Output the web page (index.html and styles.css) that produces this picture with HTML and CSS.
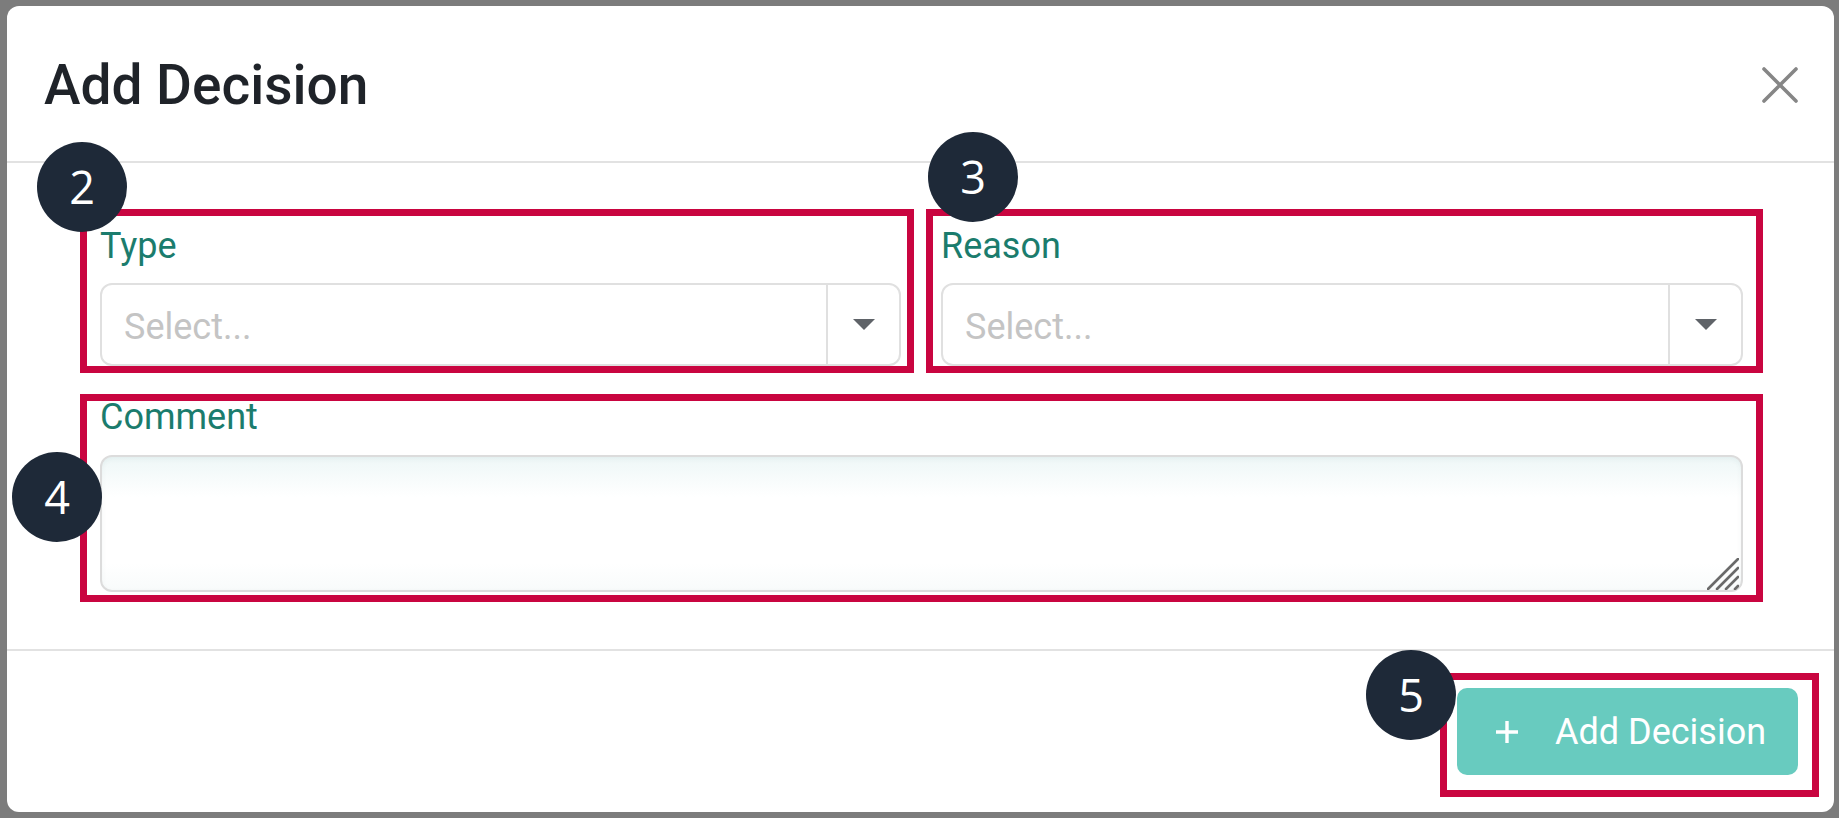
FILE: index.html
```html
<!DOCTYPE html>
<html lang="en">
<head>
	<title>Add Decision</title>
	<meta name="viewport" content="initial-scale=1.0">
	<meta charset="utf-8">

	<link rel="stylesheet" href="styles.css">
</head>
<body>

	<div class="modal">
		<header class="modal-header">
			<h2 class="modal-title">Add Decision</h2>
			<button class="modal-close" aria-label="Close">
				<svg width="36" height="36" viewBox="0 0 36 36"><path d="M2 2 L34 34 M34 2 L2 34" stroke="#868686" stroke-width="3.6" stroke-linecap="round"/></svg>
			</button>
		</header>

		<div class="modal-body">
			<div class="field-row">
				<div class="callout callout-type">
					<span class="badge badge-2">2</span>
					<label class="field-label">Type</label>
					<div class="select">
						<span class="select-value">Select...</span>
						<span class="select-indicator">
							<svg width="22" height="11" viewBox="0 0 22 11"><path d="M0 0 H22 L11 11 Z" fill="#5f6368"/></svg>
						</span>
					</div>
				</div>

				<div class="callout callout-reason">
					<span class="badge badge-3">3</span>
					<label class="field-label">Reason</label>
					<div class="select">
						<span class="select-value">Select...</span>
						<span class="select-indicator">
							<svg width="22" height="11" viewBox="0 0 22 11"><path d="M0 0 H22 L11 11 Z" fill="#5f6368"/></svg>
						</span>
					</div>
				</div>
			</div>

			<div class="callout callout-comment">
				<span class="badge badge-4">4</span>
				<label class="field-label" for="comment">Comment</label>
				<div class="textarea-wrap">
					<textarea id="comment" class="textarea"></textarea>
					<svg class="grip" width="32" height="32" viewBox="0 0 32 32"><path d="M31 1 L1 31 M31 10 L10 31 M31 19 L19 31 M31 28 L28 31" stroke="#6a6a6a" stroke-width="2.6" stroke-linecap="round"/></svg>
				</div>
			</div>
		</div>

		<footer class="modal-footer">
			<div class="callout callout-submit">
				<span class="badge badge-5">5</span>
				<button class="btn-add">
					<svg width="24" height="24" viewBox="0 0 24 24"><path d="M12 1 V23 M1 12 H23" stroke="#ffffff" stroke-width="3.4"/></svg>
					<span>Add Decision</span>
				</button>
			</div>
		</footer>
	</div>

</body>
</html>
```

FILE: styles.css
```css
body, html {
	height: 100%;
	margin: 0;
	padding: 0;
	overflow: hidden;
	font-family: Roboto, "Liberation Sans", Arial, sans-serif;
	-webkit-font-smoothing: antialiased;
}

body {
	background: #7c7c7c;
	padding: 6px 5px 6px 7px;
}

* {
	box-sizing: border-box;
}

.modal {
	height: 806px;
	background: #fff;
	border-radius: 12px;
	display: flex;
	flex-direction: column;
}

.modal-header {
	height: 157px;
	display: flex;
	align-items: center;
	justify-content: space-between;
	padding: 2px 36px 0 37px;
	border-bottom: 2px solid #e2e2e2;
}

.modal-title {
	margin: 0;
	font-size: 55px;
	font-weight: 500;
	color: #1f2329;
}

.modal-close {
	border: none;
	background: none;
	padding: 0;
	width: 36px;
	height: 36px;
	display: flex;
	cursor: pointer;
}

.modal-body {
	padding: 46px 71px 47px 73px;
	border-bottom: 2px solid #e2e2e2;
	display: flex;
	flex-direction: column;
	gap: 21px;
}

.field-row {
	display: grid;
	grid-template-columns: 834px 837px;
	gap: 12px;
}

/* red annotation frames */
.callout {
	position: relative;
	border: 7px solid #c90540;
	display: flex;
	flex-direction: column;
}

.callout-type {
	height: 164px;
	padding: 10px 6px 0 13px;
	gap: 17px;
}

.callout-reason {
	height: 164px;
	padding: 10px 13px 0 8px;
	gap: 17px;
}

.callout-comment {
	height: 208px;
	padding: 0 13px 3px 13px;
	gap: 18px;
}

.callout-comment .field-label {
	margin-top: -4px;
}

.callout-submit {
	padding: 8px 14px 15px 10px;
}

.badge {
	position: absolute;
	z-index: 3;
	width: 90px;
	height: 90px;
	border-radius: 50%;
	background: #1e2938;
	color: #fff;
	font-family: "Open Sans", sans-serif;
	font-size: 45px;
	line-height: 90px;
	text-align: center;
}

.badge-2 { left: -50px; top: -74px; }
.badge-3 { left: -5px; top: -84px; }
.badge-4 { left: -75px; top: 51px; }
.badge-5 { left: -81px; top: -30px; }

.field-label {
	display: block;
	font-size: 36px;
	line-height: 40px;
	color: #1b7c6d;
}

.select {
	height: 84px;
	border: 2px solid #e0e0e0;
	border-radius: 12px;
	display: flex;
	align-items: stretch;
}

.select-value {
	flex: 1;
	display: flex;
	align-items: center;
	padding: 5px 0 0 22px;
	font-size: 36px;
	color: #c4c4c4;
}

.select-indicator {
	width: 73px;
	border-left: 2px solid #e0e0e0;
	display: flex;
	align-items: center;
	justify-content: center;
}

.textarea-wrap {
	position: relative;
	flex: 1;
	display: flex;
}

.textarea {
	flex: 1;
	margin: 0;
	resize: none;
	border: 2px solid #dcdcdc;
	border-radius: 12px;
	background: linear-gradient(#eef7f7, #fff 30%, #fff 80%, #f8fbfb);
	box-shadow: inset 0 2px 5px rgba(0, 70, 70, 0.05);
	outline: none;
}

.grip {
	position: absolute;
	right: 4px;
	bottom: 2px;
}

.modal-footer {
	flex: 1;
	display: flex;
	justify-content: flex-end;
	align-items: flex-start;
	padding: 22px 15px 0 0;
}

.btn-add {
	width: 341px;
	height: 87px;
	border: none;
	border-radius: 10px;
	background: #68cbbf;
	color: #fff;
	display: flex;
	align-items: center;
	gap: 36px;
	padding: 0 0 0 38px;
	font-family: Roboto, sans-serif;
	font-size: 36px;
	font-weight: 400;
	cursor: pointer;
}
```
